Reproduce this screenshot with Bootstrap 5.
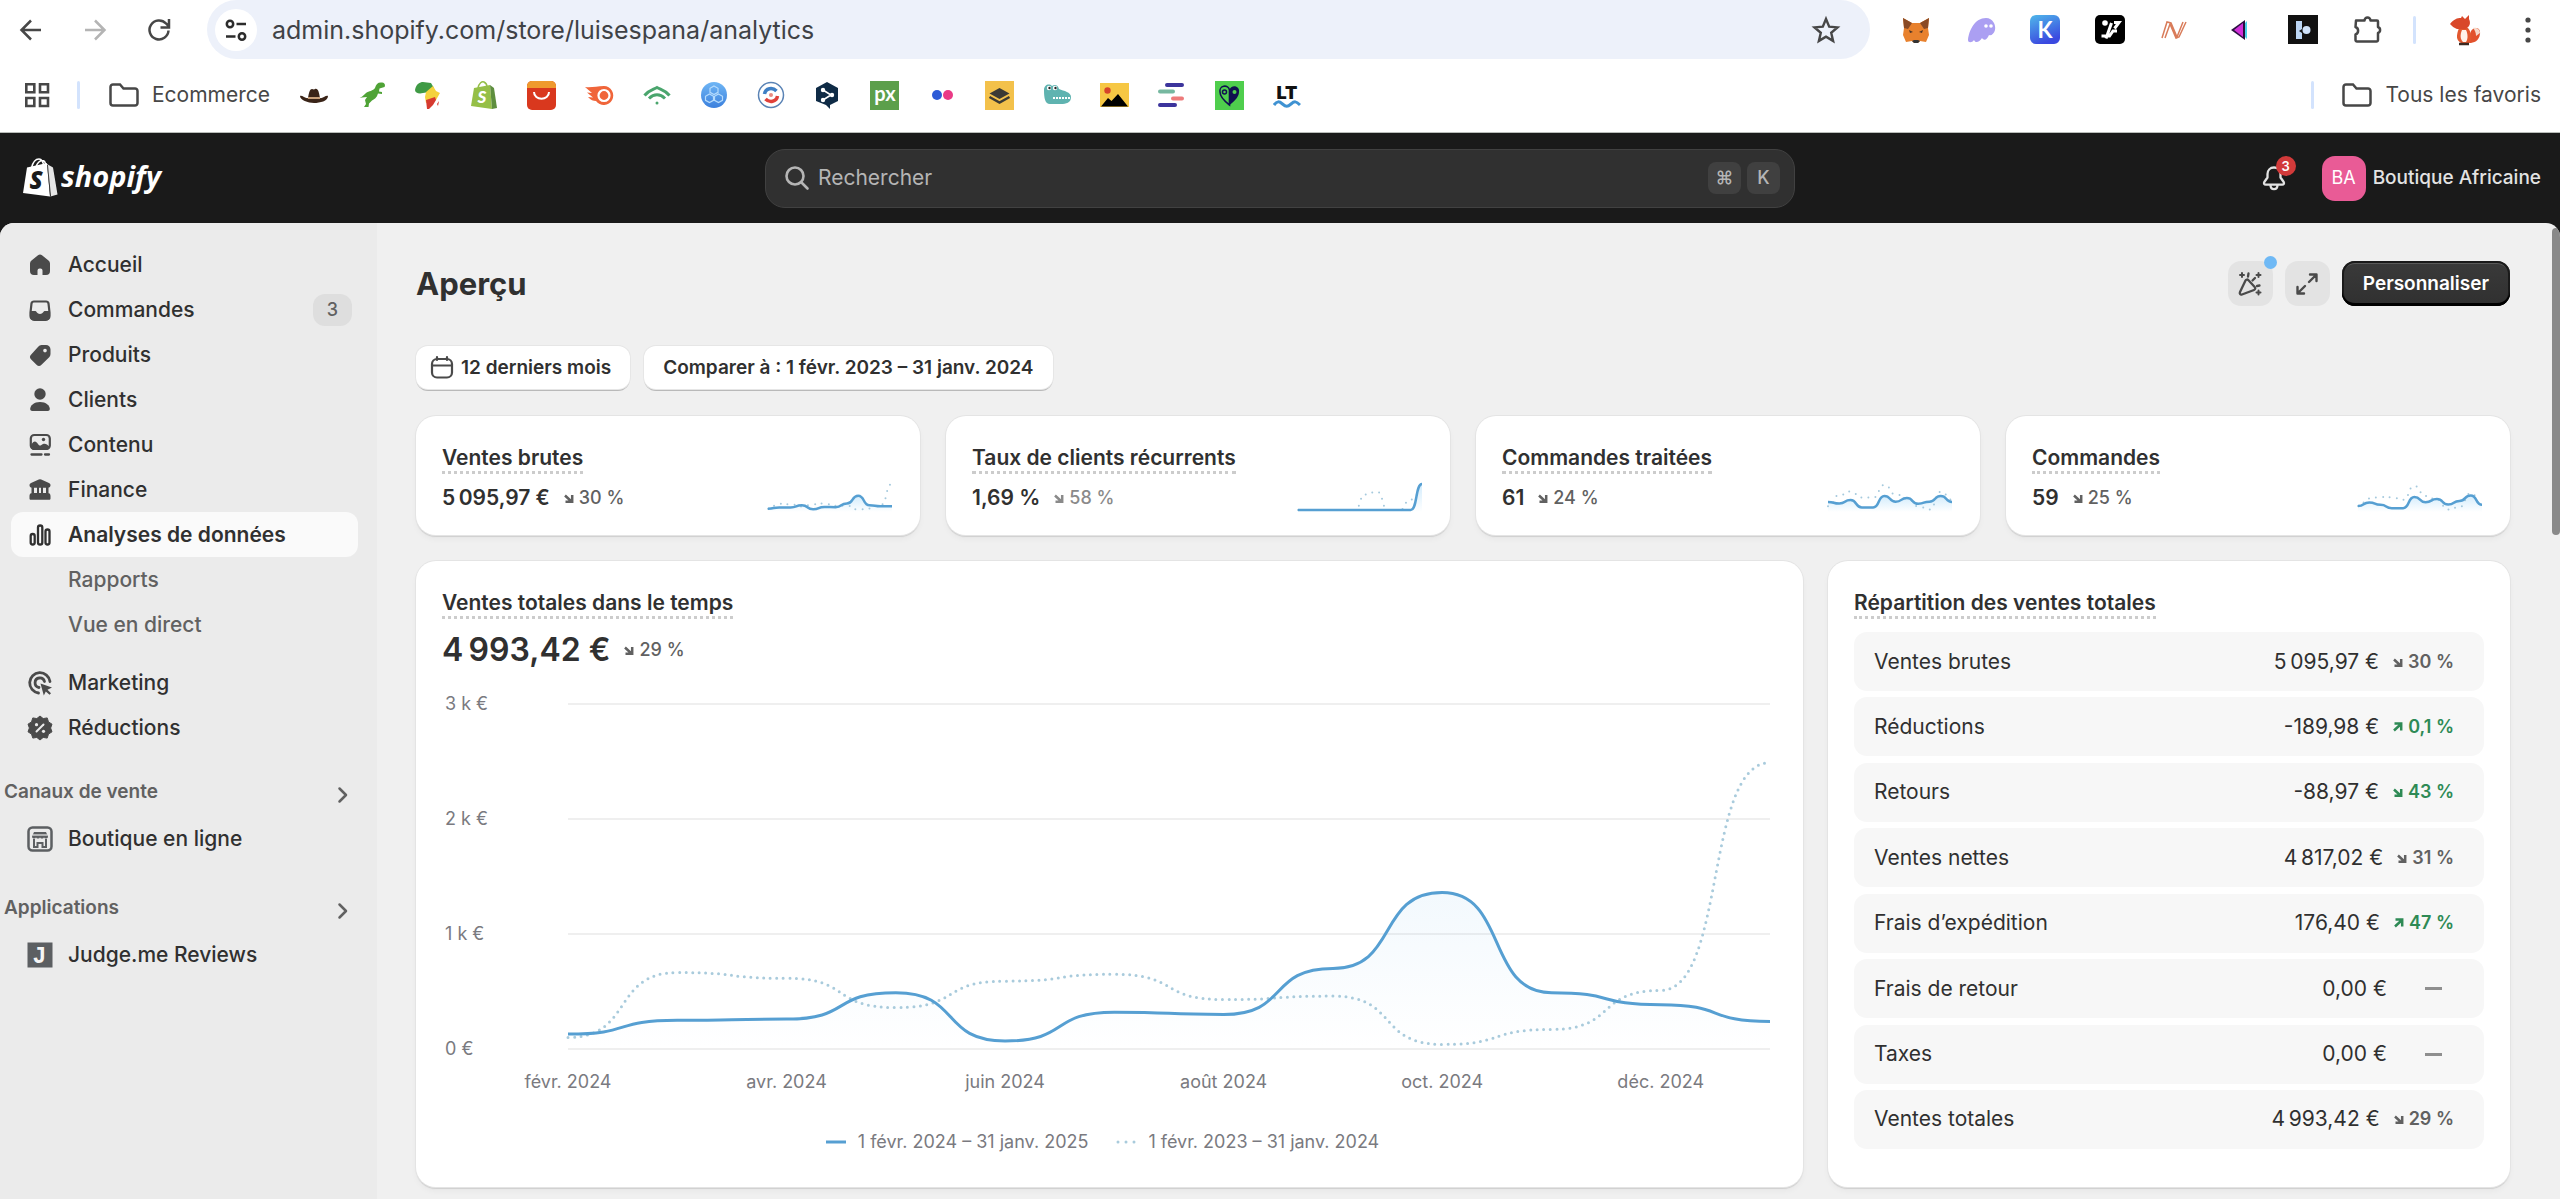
<!DOCTYPE html>
<html lang="fr" data-bs-theme="light">
<head>
<meta charset="utf-8">
<meta name="viewport" content="width=device-width, initial-scale=1">
<title>Aperçu · Boutique Africaine</title>
<link href="https://cdn.jsdelivr.net/npm/bootstrap@5.3.0/dist/css/bootstrap.min.css" rel="stylesheet">
<style>
  body { font-family: Inter, "Liberation Sans", sans-serif; font-size: 21px; line-height: 28px; color: #303030; background: #1a1a1a; overflow: hidden; }
  svg { display: block; flex: none; }
  a { color: inherit; text-decoration: none; }
  button { font: inherit; color: inherit; }
  .plain-btn { border: 0; background: none; padding: 0; display: flex; align-items: center; justify-content: center; }

  /* browser chrome */
  .browser { background: #fff; border-bottom: 1px solid #b9bdb9; color: #474747; height: 133px; }
  .browser-nav { height: 59px; padding-left: 17px; padding-right: 25px; }
  .browser-keys { gap: 36px; margin-right: 34px; }
  .omnibox { background: #edf1fa; border-radius: 30px; height: 59px; padding: 0 29px 0 8px; gap: 15px; margin-right: 31px; }
  .site-info { width: 42px; height: 42px; background: #fff; border-radius: 50%; }
  .omnibox input { border: 0; background: none; padding: 0; font-size: 25px; color: #3f4246; outline: 0; min-width: 0; }
  .extensions { width: 482px; flex: none; }
  .v-rule { width: 3px; height: 28px; border-radius: 2px; background: #d3e3fd; flex: none; }
  .nav-rule { margin: 0 33px 0 30px; }
  .bookmarks { height: 72px; padding: 0 19px 0 23px; }
  .bookmarks .folder-link { gap: 13px; }
  .start-rule { margin: 0 29px 0 26px; }
  .end-rule { margin-right: 28px; }
  .bookmark-icons { width: 1001px; margin-left: 30px; }

  /* store top bar */
  .topbar { display: grid; grid-template-columns: 1fr minmax(0, 1030px) 1fr; height: 90px; padding: 0 19px; color: #e3e3e3; }
  .brand { margin-left: 4px; }
  .searchbox { height: 59px; background: #303030; border: 1px solid #414141; border-radius: 20px; padding: 0 14px 0 16px; gap: 6px; }
  .searchbox input { border: 0; background: none; color: #b5b5b5; font-size: 21px; outline: 0; padding: 0; min-width: 0; }
  .searchbox input::placeholder { color: #b5b5b5; opacity: 1; }
  .key-cap { width: 33px; height: 32px; border-radius: 8px; background: #404040; color: #b5b5b5; font: 500 18px/32px Inter, "DejaVu Sans", sans-serif; padding: 0; display: flex; align-items: center; justify-content: center; }
  .account { gap: 7px; }
  .bell { width: 32px; height: 32px; margin-right: 32px; }
  .bell-count { top: -6px; right: -6px; width: 20px; height: 20px; border-radius: 50%; background: #d23a3a; color: #fff; font-size: 13px; line-height: 20px; font-weight: 600; }
  .avatar { width: 44px; height: 45px; border-radius: 13px; background: #e95b96; color: #fff; font-size: 18px; }
  .store-name { font-weight: 550; font-size: 19px; }

  /* shell */
  .shell { border-radius: 14px 14px 0 0; background: #f0f0f0; overflow: hidden; }
  .sidebar { width: 377px; flex: none; background: #ebebeb; padding-top: 19px; }
  .side-list { margin: 0; padding: 0 19px 0 11px; list-style: none; }
  .side-link { display: flex; align-items: center; height: 45px; border-radius: 12px; padding: 0 6px 0 13px; gap: 12px; font-weight: 500; }
  .side-link svg { color: #4a4a4a; }
  .side-link.current { background: #fafafa; font-weight: 600; }
  .side-link.current svg { color: #303030; }
  .side-sub { padding-left: 57px; color: #616161; font-weight: 450; }
  .side-count { width: 39px; height: 32px; border-radius: 12px; background: #dedede; color: #616161; font-size: 18px; line-height: 32px; }
  .side-head { height: 40px; width: 100%; padding: 0 28px 0 4px; color: #616161; font-size: 19px; font-weight: 600; justify-content: space-between; }
  .side-head svg { margin-top: 6px; }
  .gap-a { margin-top: 13px; } .gap-b { margin-top: 22px; } .gap-c { margin-top: 27px; } .gap-d { margin-top: 4px; }

  .content { padding: 38px 42px 0 39px; }
  .page-title { font-size: 31px; line-height: 45px; font-weight: 700; margin: 0; }
  .title-actions { gap: 12px; }
  .soft-btn { width: 45px; height: 45px; border-radius: 13px; background: #e3e3e3; color: #4a4a4a; }
  .news-dot { width: 13px; height: 13px; border-radius: 50%; background: #6fb9f5; top: -5px; right: -4px; }
  .dark-btn { height: 45px; border: 0; border-radius: 13px; padding: 0 21px; color: #fff; font-weight: 600; font-size: 19px; background: linear-gradient(#3a3a3a, #303030); box-shadow: inset 0 -3px 0 #000, inset 0 0 0 2px #1a1a1a, inset 0 3px 0 #5a5a5a; }
  .filters { gap: 14px; margin-top: 40px; margin-bottom: 27px; }
  .filter-btn { height: 43px; border: 0; border-radius: 12px; background: #fff; font-size: 19px; font-weight: 600; padding: 0 19px; gap: 6px; box-shadow: 0 0 0 1px #e6e6e6, 0 2px 0 0 #b9b9b9; }
  .filter-btn.with-icon { padding-left: 13px; }

  .panel { background: #fff; border-radius: 20px; box-shadow: 0 0 0 1px #e4e4e4, 0 2px 1px #cfcfcf, 0 4px 6px rgba(0,0,0,.04); }
  .kpis { display: grid; grid-template-columns: repeat(4, 1fr); gap: 26px; }
  .kpi { padding: 28px 28px 21px 26px; }
  .kpi-line { height: 32px; margin-top: 9px; }
  .kpi-figures { gap: 14px; }
  .metric-title { display: inline-block; margin: 0; font-size: 21px; line-height: 26px; font-weight: 600; border-bottom: 3px dotted #cccccc; }
  .metric-title-row { height: 29px; }
  .metric-value { font-weight: 600; font-size: 21px; }
  .metric-value.big { font-size: 32px; line-height: 40px; }
  .trend { display: inline-flex; align-items: center; gap: 5px; font-size: 18px; font-weight: 550; color: #616161; }
  .trend.muted { color: #8a8a8a; }
  .trend.good { color: #2e8a55; font-weight: 600; }
  .trend.semi { font-weight: 600; }
  .lower { display: grid; grid-template-columns: 1387fr 682fr; gap: 25px; margin-top: 26px; }
  .chart-card { padding: 28px 33px 33px 26px; }
  .chart-total { margin-top: 12px; gap: 14px; }
  .chart-body { margin-top: 22px; font-size: 18px; line-height: 24px; color: #7a7a80; }
  .y-axis { width: 126px; flex: none; height: 369px; padding-left: 3px; }
  .plot { height: 345px; margin-top: 12px; }
  .plot svg { width: 100%; height: 345px; overflow: visible; }
  .spark { overflow: visible; }
  .x-axis { display: grid; grid-template-columns: repeat(6, 1fr); margin-left: calc(126px - (100% - 126px) / 11); margin-top: 9px; text-align: center; }
  .legend-row { margin-top: 36px; gap: 28px; margin-right: 7px; }
  .legend-row span { display: flex; align-items: center; gap: 12px; }

  .breakdown { padding: 28px 26px 38px 26px; }
  .breakdown-list { list-style: none; margin: 14px 0 0; padding: 0; }
  .breakdown-list li { height: 59px; border-radius: 13px; background: #f7f7f7; padding: 0 30px 0 20px; gap: 14px; }
  .no-trend { width: 17px; height: 3px; background: #8f8f8f; margin: 0 12px 0 24px; }
  .scroll-rail { width: 8px; flex: none; padding-top: 5px; }
  .scroll-thumb { height: 307px; border-radius: 4px; background: #898989; }
</style>
<script src="https://cdn.jsdelivr.net/npm/bootstrap@5.3.0/dist/js/bootstrap.bundle.min.js"></script>
</head>
<body class="d-flex flex-column vh-100">

<svg width="0" height="0" class="position-absolute" aria-hidden="true">
  <defs>
    <symbol id="down" viewBox="0 0 10 12"><path d="M1 3.500 7.500 9.500M8.200 3V9.800H1.500" fill="none" stroke="currentColor" stroke-width="2.500"/></symbol>
    <symbol id="up" viewBox="0 0 10 12"><path d="M1 9.500 7.500 3.500M1.500 2.500H8.200V9.500" fill="none" stroke="currentColor" stroke-width="2.500"/></symbol>
    <symbol id="folder" viewBox="0 0 30 24"><path d="M1.500 4a2.500 2.500 0 0 1 2.500-2.500h7l3.500 4H26a2.500 2.500 0 0 1 2.500 2.500v12a2.500 2.500 0 0 1-2.500 2.500H4A2.500 2.500 0 0 1 1.500 20z" fill="none" stroke="currentColor" stroke-width="2.500"/></symbol>
    <symbol id="chev" viewBox="0 0 12 18"><path d="M2.500 2.500 9 9l-6.500 6.500" fill="none" stroke="currentColor" stroke-width="2.500" stroke-linecap="round" stroke-linejoin="round"/></symbol>
    <linearGradient id="areaFade" x1="0" y1="0" x2="0" y2="1"><stop offset="0" stop-color="#4fa8e8" stop-opacity=".07"/><stop offset="1" stop-color="#4fa8e8" stop-opacity="0"/></linearGradient>
    <linearGradient id="sparkFade" x1="0" y1="0" x2="0" y2="1"><stop offset="0" stop-color="#6cc0f5" stop-opacity=".3"/><stop offset="1" stop-color="#6cc0f5" stop-opacity="0"/></linearGradient>
    <linearGradient id="blueK" x1="0" y1="0" x2=".4" y2="1"><stop offset="0" stop-color="#4fb8ea"/><stop offset="1" stop-color="#3b49e0"/></linearGradient>
    <linearGradient id="blueDisc" x1="0" y1="0" x2="0" y2="1"><stop offset="0" stop-color="#6fb6f5"/><stop offset="1" stop-color="#3c80dd"/></linearGradient>
  </defs>
</svg>

<header class="browser flex-shrink-0">
  <div class="browser-nav d-flex align-items-center">
    <div class="browser-keys d-flex">
      <button class="plain-btn" aria-label="Retour"><svg width="28" height="28" viewBox="0 0 28 28" fill="none" stroke="#474747" stroke-width="2.500"><path d="M24 14H5M14 4.500 4.500 14l9.500 9.500"/></svg></button>
      <button class="plain-btn" aria-label="Avancer"><svg width="28" height="28" viewBox="0 0 28 28" fill="none" stroke="#b4b4b4" stroke-width="2.500"><path d="M4 14h19M14 4.500l9.500 9.500-9.500 9.500"/></svg></button>
      <button class="plain-btn" aria-label="Actualiser"><svg width="28" height="28" viewBox="0 0 28 28" fill="none" stroke="#474747" stroke-width="2.500"><path d="M23.500 14.500a9.500 9.500 0 1 1-2.500-7l3 3M24 3v8.500h-8.500"/></svg></button>
    </div>
    <div class="omnibox d-flex align-items-center flex-grow-1">
      <button class="plain-btn site-info" aria-label="Informations sur le site"><svg width="26" height="26" viewBox="0 0 26 26" fill="none" stroke="#2c2c2c" stroke-width="2.500"><circle cx="7" cy="7" r="3.200"/><path d="M13.500 7H23M3 19.500h9.500"/><circle cx="19" cy="19.500" r="3.200"/></svg></button>
      <input class="flex-grow-1" type="text" aria-label="Adresse" value="admin.shopify.com/store/luisespana/analytics">
      <button class="plain-btn" aria-label="Ajouter aux favoris"><svg width="30" height="30" viewBox="0 0 30 30" fill="none" stroke="#474747" stroke-width="2.400"><path d="m15 4 3.200 7.700 8.300.7-6.300 5.400 1.900 8.100L15 21.600l-7.100 4.300 1.900-8.100-6.300-5.400 8.300-.7z"/></svg></button>
    </div>
    <div class="extensions d-flex justify-content-between align-items-center">
      <svg width="30" height="30" viewBox="0 0 30 30"><path d="m2 3 9 5h8l9-5-1 10 1 7-3 7-6-1-2 2h-4l-2-2-6 1-3-7 1-7z" fill="#e8812d"/><path d="m2 3 9 5-4 6-4-1zM28 3l-9 5 4 6 4-1z" fill="#8a4a25"/><path d="m11 26 2 2h4l2-2-2-1h-4z" fill="#333"/><path d="m8 15 4 2-3 1zM22 15l-4 2 3 1z" fill="#4a3326"/></svg>
      <svg width="30" height="30" viewBox="0 0 30 30"><path d="M2 25C3 15 9 3 20 3c7 0 10 7 9 12-1 4-4 6-6 5-2 5-5 6-7 3-3 5-7 5-8 2-2 3-6 3-6 0z" fill="#ab9ff2"/><circle cx="20" cy="11" r="1.800" fill="#fff"/><circle cx="25" cy="11" r="1.800" fill="#fff"/></svg>
      <svg width="30" height="30" viewBox="0 0 30 30"><rect width="30" height="29" rx="6" fill="url(#blueK)"/><text x="15" y="22.500" text-anchor="middle" font-family="Lato" font-size="22" font-weight="700" fill="#fff">K</text></svg>
      <svg width="30" height="30" viewBox="0 0 30 30"><rect width="30" height="29" rx="5" fill="#000"/><path d="M19 7.500h5l-4.500 6M16.500 8 11 23.500M6.500 21h8l3.500-5h4" stroke="#fff" stroke-width="3" fill="none"/><circle cx="10" cy="8" r="2.800" fill="#fff"/></svg>
      <svg width="30" height="30" viewBox="0 0 30 30" fill="none" stroke="#d97c5a" stroke-width="1.500"><path d="m3 23 5-16 4 1 6 14 6-15M6 23l5-14 6 14 3-1 7-15"/></svg>
      <svg width="30" height="30" viewBox="0 0 30 30"><path d="m7 15 14-10v20z" fill="#2a1040"/><path d="m10 15 9-7v14z" fill="#d030d8"/><path d="M21 8v14l2 2V6z" fill="#49d2e8"/></svg>
      <svg width="30" height="30" viewBox="0 0 30 30"><rect width="30" height="29" fill="#111"/><path d="M8 6h6v8l-3 2 3 2v6H8z" fill="#bcd6f5"/><circle cx="18.500" cy="15" r="4" fill="#cfe2fa"/></svg>
      <button class="plain-btn" aria-label="Extensions"><svg width="30" height="30" viewBox="0 0 30 30" fill="none" stroke="#474747" stroke-width="2.500" stroke-linejoin="round"><path d="M3 5.500h8.500a3 3 0 0 1 6 0H24a1 1 0 0 1 1 1V12a3.200 3.200 0 0 1 0 6v7a1.500 1.500 0 0 1-1.500 1.500H4A1.500 1.500 0 0 1 2.500 25v-5.500a4 4 0 0 0 0-7.500z"/></svg></button>
    </div>
    <div class="v-rule nav-rule"></div>
    <svg width="32" height="32" viewBox="0 0 32 32"><path d="M22 17c3-5 10-4 9 3s-6 9-11 9z" fill="#e2512c"/><path d="M24 14c2 2 3 5 3 8l4-3c0-3-3-6-7-5z" fill="#f6d9cb"/><path d="M10 14c-3 8-3 12 2 15h8c4-4 3-10-1-15z" fill="#e2582f"/><path d="M13 16c-2 5-2 9 1 12h3c2-3 2-8 0-12z" fill="#fff2ea"/><path d="M1 10C5 5 8 4 12 4l1-2 3 3 4-4v4c2 4 1 8-4 10H8c-3-1-5-3-7-5z" fill="#d9482a"/><path d="M10 30h10" stroke="#3a2a22" stroke-width="2.500"/></svg>
    <button class="plain-btn" style="margin-left:40px" aria-label="Menu"><svg width="14" height="30" viewBox="0 0 14 30" fill="#474747"><circle cx="7" cy="5" r="2.600"/><circle cx="7" cy="15" r="2.600"/><circle cx="7" cy="25" r="2.600"/></svg></button>
  </div>

  <div class="bookmarks d-flex align-items-center">
    <button class="plain-btn" aria-label="Applications"><svg width="28" height="28" viewBox="0 0 28 28" fill="none" stroke="#474747" stroke-width="2.600"><path d="M3.300 3.300h8v8h-8zM17 3.300h8v8h-8zM3.300 17h8v8h-8zM17 17h8v8h-8z"/></svg></button>
    <div class="v-rule start-rule"></div>
    <a href="#" class="folder-link d-flex align-items-center"><svg width="30" height="24"><use href="#folder"/></svg>Ecommerce</a>
    <div class="bookmark-icons d-flex justify-content-between align-items-center">
      <svg width="28" height="28" viewBox="0 0 28 28"><path d="M0 15c2-1 6 3 8 2 1-6 2-9 4-9 1 0 2 1 3 0 3-1 4 3 5 9 2 1 6-3 8-2 0 5-8 7-14 7S0 19 0 15z" fill="#3a2418"/><path d="M8 16h12v2H8z" fill="#c9a07a"/></svg>
      <svg width="28" height="28" viewBox="0 0 28 28"><path d="M0 17c4 0 6-2 9-5 3-2 7-2 9-5 1-4 3-6 7-5.500 3 0 3.500 3 2.500 4.500l-5 1.500-.5 3 3 .5v2l-4-.5c-1 4-4 6-6 7l-3 3-.5 3.500H7l2-3-1-4 2-3c-4 0-6 1-10 1z" fill="#4fa336"/></svg>
      <svg width="28" height="28" viewBox="0 0 28 28"><path d="M1 9C2 3 6 1 9 1l8 1 3 5-5 4-6 1c-4 1-8 0-8-3z" fill="#3f9a45"/><path d="m12 11 7-6 3 5 4 2-4 7-10 3-1-6z" fill="#f4d23c"/><path d="m12 19 9-3 1 3-3 5-4 4h-2zM25 20l-1 5-1-2z" fill="#d63a2f"/></svg>
      <svg width="28" height="30" viewBox="0 0 28 30"><path d="m4 8 16-3 2 24L1 26z" fill="#95bf47"/><path d="m20 5 4 3 3 20-5 1z" fill="#5e8e3e"/><path d="M8 8c1-5 4-7 6-6s3 3 3 5" fill="none" stroke="#95bf47" stroke-width="1.500"/><text x="12" y="23" text-anchor="middle" font-family="Lato" font-weight="900" font-style="italic" font-size="17" fill="#fff">S</text></svg>
      <svg width="29" height="29" viewBox="0 0 29 29"><rect width="29" height="29" rx="5" fill="#d9381e"/><path d="M0 5a5 5 0 0 1 5-5h19a5 5 0 0 1 5 5v2H0z" fill="#ef9a2e"/><path d="M7 11c0 9 15 9 15 0" fill="none" stroke="#fff" stroke-width="2"/></svg>
      <svg width="29" height="28" viewBox="0 0 29 28"><path d="M0 6c6 1 12-1 19-1a9.500 9.500 0 1 1-8 15c-3 0-5-1-8-4l5 .5-6-5 5 .5z" fill="#f0653a"/><circle cx="19" cy="14.500" r="5.500" fill="none" stroke="#fff" stroke-width="2.200"/></svg>
      <svg width="28" height="28" viewBox="0 0 28 28" fill="none" stroke="#4aa56d" stroke-width="3"><path d="M1.500 14.500C6 9 9 9 14 6.500 19 9 22 9 26.500 14.500"/><path d="M6 17.500c5-5 11-5 16 0"/><circle cx="14" cy="22" r="1.500" fill="#4aa56d" stroke="none"/></svg>
      <svg width="28" height="28" viewBox="0 0 28 28"><circle cx="14" cy="14" r="13" fill="url(#blueDisc)"/><g fill="none" stroke="#b5dbfd" stroke-width="1.200"><path d="m14 5 4 2.300v4L14 13.600l-4-2.300v-4zM9.500 13l4 2.300v4L9.500 21.600l-4-2.300v-4zM18.500 13l4 2.300v4l-4 2.300-4-2.300v-4z"/></g></svg>
      <svg width="28" height="28" viewBox="0 0 28 28" fill="none"><circle cx="14" cy="14" r="12.500" stroke="#5a83b5" stroke-width="1.500"/><path d="M7.500 13c1-6 8-7 12-3" stroke="#3f7fc4" stroke-width="3.500"/><path d="M20.500 15c-1 6-8 7-12 3" stroke="#e0413a" stroke-width="3.500"/><circle cx="14" cy="14" r="2" fill="#e98a80"/></svg>
      <svg width="28" height="28" viewBox="0 0 28 28"><path d="m14 1 11 6v13l-8 4v4l-4-4-10-4V7z" fill="#0f2b46"/><path d="m10 9 8 5-8 5M18 14h2" stroke="#fff" stroke-width="1.600" fill="none"/><circle cx="10" cy="9" r="2.200" fill="#fff"/><circle cx="19" cy="14" r="2.200" fill="#fff"/><circle cx="10" cy="19" r="2.200" fill="#fff"/></svg>
      <svg width="29" height="29" viewBox="0 0 29 29"><rect width="29" height="29" fill="#5c9f4b"/><text x="15" y="20" text-anchor="middle" font-family="Lato" font-weight="700" font-size="20" fill="#fff">px</text></svg>
      <svg width="28" height="28" viewBox="0 0 28 28"><circle cx="9" cy="14" r="5" fill="#2d5bd7"/><circle cx="20" cy="14" r="5" fill="#ea3a86"/></svg>
      <svg width="29" height="29" viewBox="0 0 29 29"><rect width="29" height="29" fill="#f3c14b"/><path d="m14.500 7 10 5.500-10 5.500-10-5.500z" fill="#3b3a35"/><path d="m4.500 16 10 5.500 10-5.500" fill="none" stroke="#3b3a35" stroke-width="2.500"/></svg>
      <svg width="29" height="28" viewBox="0 0 29 28"><path d="M1 9c0-5 5-7 8-4 3-2 6-1 7 3 5 2 12 3 12 8 0 6-5 7-10 7H7c-5 0-6-6-6-14z" fill="#5fb3b0"/><path d="M10 17h17" stroke="#fff" stroke-width="2" stroke-dasharray="2 1"/><circle cx="6" cy="7" r="2.200" fill="#fff"/><circle cx="12" cy="7" r="2.200" fill="#fff"/><circle cx="6.500" cy="7" r="1.200" fill="#222"/><circle cx="12.500" cy="7" r="1.200" fill="#222"/></svg>
      <svg width="29" height="24" viewBox="0 0 29 24"><rect width="29" height="24" fill="#f6c744"/><path d="M1 23.500 8 15l3.500 3L18 11l10 12.500z" fill="#000"/><circle cx="7.500" cy="7.500" r="3.200" fill="#d6452a"/></svg>
      <svg width="28" height="26" viewBox="0 0 28 26" stroke-width="4" stroke-linecap="round"><path d="M9 3h15M2 23h15" stroke="#3c349c"/><path d="M2 9.500h13" stroke="#76b8a0"/><path d="M15 16.500h9" stroke="#ee7b7b"/></svg>
      <svg width="29" height="29" viewBox="0 0 29 29"><rect width="29" height="29" fill="#4fce4d"/><path d="M14.500 24C8 19 5 15 5 11a4.800 4.800 0 0 1 9.500-2v15z" fill="none" stroke="#10104f" stroke-width="1.600"/><path d="M14.500 24C21 19 24 15 24 11a4.800 4.800 0 0 0-9.500-2z" fill="#10104f"/><circle cx="9.500" cy="11" r="2" fill="none" stroke="#10104f" stroke-width="1.500"/><circle cx="19.500" cy="11" r="2" fill="#4fce4d"/></svg>
      <svg width="28" height="28" viewBox="0 0 28 28"><text x="14" y="18" text-anchor="middle" font-family="Inter" font-weight="900" font-size="18" fill="#111">LT</text><path d="M1 24c3-4 5-4 8.500-1s5 3 8.500 0 5-3 9 1" fill="none" stroke="#3f92d2" stroke-width="3"/></svg>
    </div>
    <div class="v-rule ms-auto end-rule"></div>
    <a href="#" class="folder-link d-flex align-items-center"><svg width="30" height="24"><use href="#folder"/></svg>Tous les favoris</a>
  </div>
</header>

<nav class="topbar align-items-center flex-shrink-0" aria-label="Barre supérieure">
  <a href="#" class="brand" aria-label="Shopify"><svg width="148" height="56" viewBox="0 -8 148 56"><path d="M4 9.500 24 5l3 33.500L0 35z" fill="#fff"/><path d="m24 6 6 3.500 4.500 27-7 2z" fill="#e6e6e6"/><path d="M24.500 7 27.500 38" stroke="#1a1a1a" stroke-width=".8"/><path d="M8.500 10C10 3.500 13.500 1 16 1s4.500 3 4.500 7M13 9c1-4 4-6.500 6-6.500 2.500 0 3.500 2 3.500 4.500" fill="none" stroke="#fff" stroke-width="1.500"/><text x="13" y="31" text-anchor="middle" font-family="Open Sans" font-weight="800" font-style="italic" font-size="24" fill="#1a1a1a">S</text><text x="38" y="29" font-family="Open Sans" font-weight="700" font-style="italic" font-size="29" fill="#fff">shopify</text></svg></a>
  <div class="searchbox d-flex align-items-center">
    <svg width="30" height="30" viewBox="0 0 30 30" fill="none" stroke="#b5b5b5" stroke-width="2.600" stroke-linecap="round"><circle cx="13" cy="13" r="8.500"/><path d="m19.500 19.500 6 6"/></svg>
    <input class="flex-grow-1" type="search" placeholder="Rechercher" aria-label="Rechercher">
    <kbd class="key-cap">⌘</kbd><kbd class="key-cap">K</kbd>
  </div>
  <div class="d-flex align-items-center justify-content-end">
    <button class="plain-btn bell position-relative" aria-label="Notifications"><svg width="32" height="32" viewBox="0 0 32 32" fill="none" stroke="#e3e3e3" stroke-width="2.300" stroke-linejoin="round"><path d="M16 5.500c-4 0-6.500 3-6.500 6.500v3.500L6.300 20c-.8 1.400 0 2.700 1.500 2.700h16.400c1.500 0 2.300-1.300 1.500-2.700L22.500 15.500V12C22.500 8.500 20 5.500 16 5.500zM12.500 23c0 5.500 7 5.500 7 0"/></svg><span class="bell-count position-absolute text-center">3</span></button>
    <button class="plain-btn account"><span class="avatar d-flex align-items-center justify-content-center">BA</span><span class="store-name">Boutique Africaine</span></button>
  </div>
</nav>

<div class="shell d-flex flex-grow-1">
  <aside class="sidebar">
    <ul class="side-list">
      <li><a class="side-link" href="#"><svg width="32" height="32" viewBox="0 0 32 32" fill="currentColor"><path d="M14 6.200a3.200 3.200 0 0 1 4 0l6.500 5.300a4 4 0 0 1 1.500 3V22a4 4 0 0 1-4 4h-3.500v-4.500a2 2 0 0 0-2-2h-1a2 2 0 0 0-2 2V26H10a4 4 0 0 1-4-4v-7.500a4 4 0 0 1 1.500-3z"/></svg>Accueil</a></li>
      <li><a class="side-link" href="#"><svg width="32" height="32" viewBox="0 0 32 32"><path d="M10 7.500h12a2.500 2.500 0 0 1 2.500 2l1 9V22a4 4 0 0 1-4 4h-11a4 4 0 0 1-4-4v-3.500l1-9a2.500 2.500 0 0 1 2.500-2z" fill="none" stroke="currentColor" stroke-width="2.200"/><path d="M6 17h5.500c1 0 1.500 3 4.500 3s3.500-3 4.500-3H26v5a4 4 0 0 1-4 4.500H10A4 4 0 0 1 6 22z" fill="currentColor"/></svg>Commandes<span class="side-count ms-auto text-center">3</span></a></li>
      <li><a class="side-link" href="#"><svg width="32" height="32" viewBox="0 0 32 32" fill="currentColor" fill-rule="evenodd"><path d="M17.500 6H22a4.500 4.500 0 0 1 4.500 4.500V15a4.500 4.500 0 0 1-1.300 3.200l-7.700 7.600a3.500 3.500 0 0 1-5 0l-5.300-5.300a3.500 3.500 0 0 1 0-5l7-7.800A4.500 4.500 0 0 1 17.500 6zM21 9.700a1.800 1.800 0 1 0 .01 0z"/></svg>Produits</a></li>
      <li><a class="side-link" href="#"><svg width="32" height="32" viewBox="0 0 32 32" fill="currentColor"><circle cx="16" cy="10" r="5.700"/><path d="M16 18c6 0 9.800 3.500 9.800 7 0 1.300-.8 2-2 2H8.200c-1.200 0-2-.7-2-2 0-3.500 3.800-7 9.800-7z"/></svg>Clients</a></li>
      <li><a class="side-link" href="#"><svg width="32" height="32" viewBox="0 0 32 32"><rect x="6.800" y="6" width="19" height="14" rx="3.500" fill="none" stroke="currentColor" stroke-width="2.200"/><path d="M7 16c3-5 5-4 7-1s3 1 5 0 4 0 7 3c-1 2-2 3-4 3H10c-2 0-3-2-3-5z" fill="currentColor"/><circle cx="19.500" cy="10.500" r="1.700" fill="currentColor"/><path d="M7.500 25.500h10M21 25.500h4" stroke="currentColor" stroke-width="2.300" stroke-linecap="round"/></svg>Contenu</a></li>
      <li><a class="side-link" href="#"><svg width="32" height="32" viewBox="0 0 32 32" fill="currentColor"><path d="M14.800 5.500a3 3 0 0 1 2.400 0L25 9c1 .5 1.500 1.300 1.500 2.200 0 1.500-1 2.500-2.300 2.500H7.800c-1.300 0-2.300-1-2.300-2.500 0-.9.500-1.700 1.500-2.200zM7.500 13.500h2.500v6H7.500zM13 13.500h2v6h-2zM17 13.500h2v6h-2zM22 13.500h2.500v6H22zM5.500 22c0-1.800 1-3 2.500-3h16c1.500 0 2.500 1.200 2.500 3v2.500c0 .8-.500 1.300-1.300 1.300H6.800c-.8 0-1.300-.500-1.300-1.300z"/></svg>Finance</a></li>
      <li><a class="side-link current" href="#" aria-current="page"><svg width="32" height="32" viewBox="0 0 32 32" fill="none" stroke="currentColor" stroke-width="2.300"><rect x="6.700" y="15" width="4" height="10.500" rx="2"/><rect x="14" y="6.500" width="4.300" height="19" rx="2.100"/><rect x="21.500" y="10.500" width="4" height="15" rx="2"/></svg>Analyses de données</a></li>
      <li><a class="side-link side-sub" href="#">Rapports</a></li>
      <li><a class="side-link side-sub" href="#">Vue en direct</a></li>
      <li class="gap-a"><a class="side-link" href="#"><svg width="32" height="32" viewBox="0 0 32 32" fill="none" stroke="currentColor" stroke-width="2.800" stroke-linecap="round"><path d="M26 14.500A10.200 10.200 0 1 0 14.500 26M20.500 14.500a4.800 4.800 0 1 0-5.500 6"/><path d="m16.500 16.500 11.500 4-4.500 2.200 3.500 3.600-1.500 1.500-3.700-3.400-2 4z" fill="currentColor" stroke="none"/></svg>Marketing</a></li>
      <li><a class="side-link" href="#"><svg width="32" height="32" viewBox="0 0 32 32"><path d="m16 4 3.200 2.600 4-.7 1.300 4 3.500 2.300-1.400 3.800 1.400 3.800-3.500 2.300-1.300 4-4-.7L16 28l-3.200-2.600-4 .7-1.300-4L4 19.800 5.400 16 4 12.200l3.500-2.300 1.300-4 4 .7z" fill="currentColor" stroke="currentColor" stroke-width="1" stroke-linejoin="round"/><path d="m12.500 19.500 7-7" stroke="#ebebeb" stroke-width="2" stroke-linecap="round"/><circle cx="12.500" cy="12.700" r="1.600" fill="#ebebeb"/><circle cx="19.500" cy="19.300" r="1.600" fill="#ebebeb"/></svg>Réductions</a></li>
    </ul>
    <button class="plain-btn side-head gap-b">Canaux de vente<svg width="12" height="18"><use href="#chev"/></svg></button>
    <ul class="side-list gap-d">
      <li><a class="side-link" href="#"><svg width="32" height="32" viewBox="0 0 32 32"><rect x="4.500" y="4.500" width="23" height="23" rx="4" fill="#ebebeb" stroke="#5c5f62" stroke-width="2.500"/><path d="M10 9h12l2 4.500c0 1.500-1 2-2 2s-2-.5-2-1.500c0 1-1 1.500-2 1.500s-2-.5-2-1.500c0 1-1 1.500-2 1.500s-2-.5-2-1.500c0 1-1 1.500-2 1.500s-2-.5-2-2z" fill="#5c5f62"/><path d="M8.500 12h15" stroke="#ebebeb" stroke-width="1.200"/><path d="M10 16v8h3.500v-4h5v4H22v-8" fill="none" stroke="#5c5f62" stroke-width="2"/></svg>Boutique en ligne</a></li>
    </ul>
    <button class="plain-btn side-head gap-c">Applications<svg width="12" height="18"><use href="#chev"/></svg></button>
    <ul class="side-list gap-d">
      <li><a class="side-link" href="#"><svg width="32" height="32" viewBox="0 0 32 32"><rect x="3.500" y="3.500" width="25" height="25" fill="#5c5f62"/><text x="15.500" y="23.500" text-anchor="middle" font-family="Liberation Mono" font-weight="700" font-size="23" fill="#f5f5f5">J</text></svg>Judge.me Reviews</a></li>
    </ul>
  </aside>

  <main class="content flex-grow-1">
    <div class="d-flex align-items-center">
      <h1 class="page-title me-auto">Aperçu</h1>
      <div class="title-actions d-flex">
        <button class="plain-btn soft-btn position-relative" aria-label="Nouveautés"><svg width="32" height="32" viewBox="0 0 32 32" fill="none" stroke="currentColor" stroke-width="2.300" stroke-linecap="round" stroke-linejoin="round"><path d="M11.500 12.500 6 24c-.8 1.800.4 3 2 2.500l12-4.500c1.500-.6 1.600-2 .7-3l-6.200-6.800c-1-1-2.400-.9-3 .3z"/><path d="M14.500 5.500 14 8.500M18.500 12.500l2.500-2.500M23 18l2.500-.5"/><path d="M8 5v4M6 7h4M24.500 5v4M22.500 7h4M24.500 22.500v4M22.500 24.500h4" stroke-width="2"/></svg><span class="news-dot position-absolute"></span></button>
        <button class="plain-btn soft-btn" aria-label="Plein écran"><svg width="32" height="32" viewBox="0 0 32 32" fill="none" stroke="currentColor" stroke-width="2.400" stroke-linecap="round" stroke-linejoin="round"><path d="M19 6.500h6.500V13M25 7l-7 7M13 25.500H6.500V19M7 25l7-7"/></svg></button>
        <button class="dark-btn">Personnaliser</button>
      </div>
    </div>

    <div class="filters d-flex">
      <button class="plain-btn filter-btn with-icon"><svg width="26" height="28" viewBox="0 0 26 28" fill="none" stroke="#4a4a4a" stroke-width="2.200" stroke-linecap="round"><rect x="3" y="5" width="20" height="18.500" rx="5"/><path d="M3.500 11.500h19M8 3v3M18 3v3"/></svg>12 derniers mois</button>
      <button class="plain-btn filter-btn">Comparer à : 1 févr. 2023 – 31 janv. 2024</button>
    </div>

    <section class="kpis">
      <article class="panel kpi">
        <div class="metric-title-row"><h2 class="metric-title">Ventes brutes</h2></div>
        <div class="kpi-line d-flex align-items-center justify-content-between">
          <div class="kpi-figures d-flex align-items-center"><span class="metric-value">5&#8239;095,97 €</span><span class="trend"><svg width="10" height="12"><use href="#down"/></svg>30 %</span></div>
          <svg class="spark" width="124" height="28" data-now=".05,.1,.1,.18,.03,.12,.11,.25,.55,.18,.14,.14" data-before=".05,.24,.22,.13,.22,.25,.16,.17,.02,.06,.2,1"></svg>
        </div>
      </article>
      <article class="panel kpi">
        <div class="metric-title-row"><h2 class="metric-title">Taux de clients récurrents</h2></div>
        <div class="kpi-line d-flex align-items-center justify-content-between">
          <div class="kpi-figures d-flex align-items-center"><span class="metric-value">1,69 %</span><span class="trend muted"><svg width="10" height="12"><use href="#down"/></svg>58 %</span></div>
          <svg class="spark" width="124" height="28" data-now="0,0,0,0,0,0,0,0,0,0,0,1" data-before="0,0,0,0,0,0,.6,.7,0,0,.4,.7"></svg>
        </div>
      </article>
      <article class="panel kpi">
        <div class="metric-title-row"><h2 class="metric-title">Commandes traitées</h2></div>
        <div class="kpi-line d-flex align-items-center justify-content-between">
          <div class="kpi-figures d-flex align-items-center"><span class="metric-value">61</span><span class="trend"><svg width="10" height="12"><use href="#down"/></svg>24 %</span></div>
          <svg class="spark" width="124" height="28" data-now=".31,.25,.38,.1,.1,.54,.32,.46,.24,.32,.54,.31" data-before=".14,.57,.71,.48,.48,.96,.6,.45,.14,.02,.7,.4"></svg>
        </div>
      </article>
      <article class="panel kpi">
        <div class="metric-title-row"><h2 class="metric-title">Commandes</h2></div>
        <div class="kpi-line d-flex align-items-center justify-content-between">
          <div class="kpi-figures d-flex align-items-center"><span class="metric-value">59</span><span class="trend"><svg width="10" height="12"><use href="#down"/></svg>25 %</span></div>
          <svg class="spark" width="124" height="28" data-now=".15,.29,.2,.07,.07,.5,.3,.42,.21,.35,.56,.2" data-before=".15,.44,.5,.49,.39,.92,.54,.4,.02,.11,.64,.21"></svg>
        </div>
      </article>
    </section>

    <section class="lower">
      <article class="panel chart-card">
        <div class="metric-title-row"><h2 class="metric-title">Ventes totales dans le temps</h2></div>
        <div class="chart-total d-flex align-items-center"><span class="metric-value big">4&#8239;993,42 €</span><span class="trend"><svg width="10" height="12"><use href="#down"/></svg>29 %</span></div>
        <div class="chart-body">
          <div class="d-flex">
            <div class="y-axis d-flex flex-column justify-content-between"><span>3 k €</span><span>2 k €</span><span>1 k €</span><span>0 €</span></div>
            <div class="plot flex-grow-1"><svg id="sales" role="img" aria-label="Ventes totales dans le temps"></svg></div>
          </div>
          <div class="x-axis"><span>févr. 2024</span><span>avr. 2024</span><span>juin 2024</span><span>août 2024</span><span>oct. 2024</span><span>déc. 2024</span></div>
          <div class="legend-row d-flex justify-content-center">
            <span><svg width="20" height="4"><path d="M0 2h20" stroke="#569fd2" stroke-width="3"/></svg>1 févr. 2024 – 31 janv. 2025</span>
            <span><svg width="20" height="4"><path d="M2 2h18" stroke="#a9cbdc" stroke-width="3" stroke-linecap="round" stroke-dasharray="0 8"/></svg>1 févr. 2023 – 31 janv. 2024</span>
          </div>
        </div>
      </article>

      <article class="panel breakdown d-flex flex-column">
        <div class="metric-title-row"><h2 class="metric-title">Répartition des ventes totales</h2></div>
        <ul class="breakdown-list d-flex flex-column justify-content-between flex-grow-1">
          <li class="d-flex align-items-center"><span class="me-auto">Ventes brutes</span><span>5&#8239;095,97 €</span><span class="trend semi"><svg width="10" height="12"><use href="#down"/></svg>30 %</span></li>
          <li class="d-flex align-items-center"><span class="me-auto">Réductions</span><span>-189,98 €</span><span class="trend good"><svg width="10" height="12"><use href="#up"/></svg>0,1 %</span></li>
          <li class="d-flex align-items-center"><span class="me-auto">Retours</span><span>-88,97 €</span><span class="trend good"><svg width="10" height="12"><use href="#down"/></svg>43 %</span></li>
          <li class="d-flex align-items-center"><span class="me-auto">Ventes nettes</span><span>4&#8239;817,02 €</span><span class="trend semi"><svg width="10" height="12"><use href="#down"/></svg>31 %</span></li>
          <li class="d-flex align-items-center"><span class="me-auto">Frais d’expédition</span><span>176,40 €</span><span class="trend good"><svg width="10" height="12"><use href="#up"/></svg>47 %</span></li>
          <li class="d-flex align-items-center"><span class="me-auto">Frais de retour</span><span>0,00 €</span><span class="no-trend"></span></li>
          <li class="d-flex align-items-center"><span class="me-auto">Taxes</span><span>0,00 €</span><span class="no-trend"></span></li>
          <li class="d-flex align-items-center"><span class="me-auto">Ventes totales</span><span>4&#8239;993,42 €</span><span class="trend semi"><svg width="10" height="12"><use href="#down"/></svg>29 %</span></li>
        </ul>
      </article>
    </section>
  </main>
  <div class="scroll-rail"><div class="scroll-thumb"></div></div>
</div>

<script>
  // Smooth curve with a horizontal tangent at every point.
  function curve(values, w, h, max) {
    const step = w / (values.length - 1), y = v => h - v / max * h;
    let d = `M0 ${y(values[0])}`;
    for (let i = 1; i < values.length; i++) {
      const x = i * step;
      d += `C${x - step * .4} ${y(values[i - 1])} ${x - step * .6} ${y(values[i])} ${x} ${y(values[i])}`;
    }
    return d;
  }
  document.querySelectorAll('.spark').forEach(s => {
    const now = s.dataset.now.split(',').map(Number), before = s.dataset.before.split(',').map(Number);
    const line = curve(now, 124, 26, 1);
    s.innerHTML = `<path d="${line}V28H0Z" fill="url(#sparkFade)"/>
      <path d="${curve(before, 124, 26, 1)}" fill="none" stroke="#a5c9dd" stroke-width="2" stroke-linecap="round" stroke-dasharray="0 7"/>
      <path d="${line}" fill="none" stroke="#569fd2" stroke-width="2.500"/>`;
  });
  const current = [.13, .25, .26, .49, .07, .32, .3, .7, 1.36, .49, .385, .24];
  const previous = [.1, .665, .615, .36, .59, .65, .43, .46, .04, .17, .51, 2.49];
  function drawSales() {
    const svg = document.getElementById('sales'), w = svg.clientWidth, h = 345;
    const line = curve(current, w, h, 3);
    svg.innerHTML = [0, 115, 230, 345].map(y => `<path d="M0 ${y}H${w}" stroke="#efefef" stroke-width="2"/>`).join('') +
      `<path d="${line}V${h}H0Z" fill="url(#areaFade)"/>
       <path d="${curve(previous, w, h, 3)}" fill="none" stroke="#a9cbdc" stroke-width="3" stroke-linecap="round" stroke-dasharray="0 6.500"/>
       <path d="${line}" fill="none" stroke="#569fd2" stroke-width="3"/>`;
  }
  drawSales();
  addEventListener('resize', drawSales);
</script>
</body>
</html>
